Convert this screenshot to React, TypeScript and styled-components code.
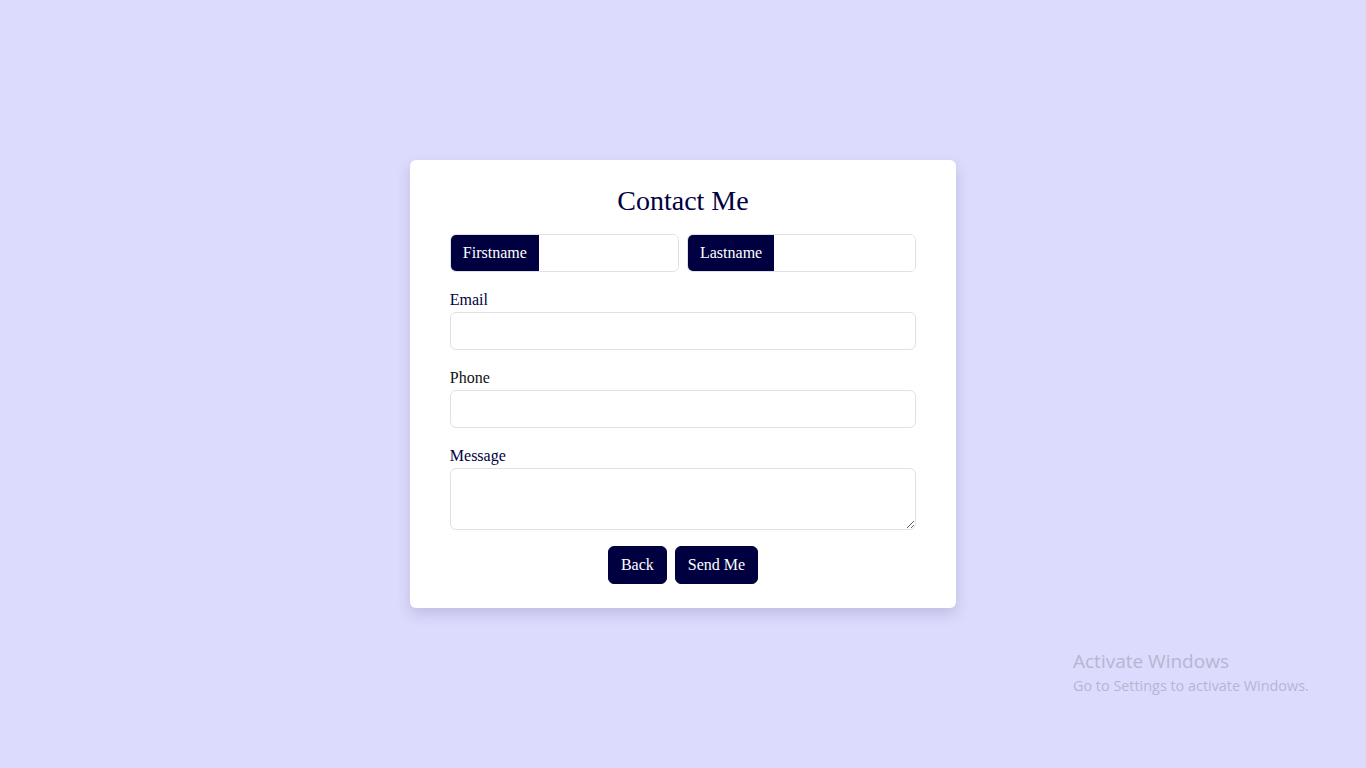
import styled, { createGlobalStyle } from "styled-components";

const NAVY = "#000040";

const GlobalStyle = createGlobalStyle`
  * {
    box-sizing: border-box;
  }
  html, body {
    margin: 0;
    padding: 0;
  }
  body {
    background: #dcdbfd;
    font-family: "Liberation Serif", "Times New Roman", serif;
    font-size: 16px;
    line-height: 1.5;
    color: #212529;
  }
`;

const Page = styled.main`
  position: relative;
  min-height: 100vh;
  display: flex;
  align-items: center;
  justify-content: center;
`;

const Card = styled.form`
  width: 40%;
  background: #fff;
  border-radius: 6px;
  padding: 25px 40px 24px;
  box-shadow: 0 6px 14px rgba(60, 60, 110, 0.18);
`;

const Title = styled.h2`
  margin: 0 0 16px;
  font-size: 28px;
  font-weight: 400;
  line-height: 1.15;
  text-align: center;
  color: ${NAVY};
`;

const NameRow = styled.div`
  display: grid;
  grid-template-columns: 1fr 1fr;
  gap: 8px;
  margin-bottom: 16px;
`;

const InputGroup = styled.div`
  display: flex;
  height: 38px;
  border: 1px solid #dee2e6;
  border-radius: 6px;
  overflow: hidden;
`;

const Addon = styled.label`
  display: flex;
  align-items: center;
  padding: 0 12px;
  background: ${NAVY};
  color: #fff;
  white-space: nowrap;
`;

const GroupInput = styled.input`
  flex: 1;
  min-width: 0;
  border: none;
  outline: none;
  padding: 0 12px;
  font: inherit;
`;

const Field = styled.div`
  margin-bottom: 16px;
`;

const Label = styled.label<{ $dark?: boolean }>`
  display: block;
  color: ${({ $dark }) => ($dark ? "#111" : NAVY)};
`;

const Input = styled.input`
  display: block;
  width: 100%;
  height: 38px;
  padding: 6px 12px;
  border: 1px solid #dee2e6;
  border-radius: 6px;
  font: inherit;
  outline: none;
`;

const TextArea = styled.textarea`
  display: block;
  width: 100%;
  height: 62px;
  padding: 6px 12px;
  border: 1px solid #dee2e6;
  border-radius: 6px;
  font: inherit;
  outline: none;
  resize: vertical;
`;

const Actions = styled.div`
  display: flex;
  justify-content: center;
  gap: 8px;
`;

const Button = styled.button`
  height: 38px;
  padding: 0 12px;
  background: ${NAVY};
  color: #fff;
  border: 1px solid ${NAVY};
  border-radius: 6px;
  font: inherit;
  cursor: pointer;
`;

const Watermark = styled.div`
  position: absolute;
  left: 1073px;
  top: 650px;
  font-family: "Open Sans", "Noto Sans", sans-serif;
  color: #b6b5d2;
  line-height: 1.2;
`;

const WatermarkTitle = styled.div`
  font-size: 19px;
`;

const WatermarkText = styled.div`
  font-size: 14.4px;
  margin-top: 4px;
`;

const App: React.FC = () => {
  return (
    <>
      <GlobalStyle />
      <Page>
        <Card onSubmit={(evt) => evt.preventDefault()}>
          <Title>Contact Me</Title>
          <NameRow>
            <InputGroup>
              <Addon htmlFor="firstname">Firstname</Addon>
              <GroupInput id="firstname" type="text" />
            </InputGroup>
            <InputGroup>
              <Addon htmlFor="lastname">Lastname</Addon>
              <GroupInput id="lastname" type="text" />
            </InputGroup>
          </NameRow>
          <Field>
            <Label htmlFor="email">Email</Label>
            <Input id="email" type="email" />
          </Field>
          <Field>
            <Label htmlFor="phone" $dark>
              Phone
            </Label>
            <Input id="phone" type="tel" />
          </Field>
          <Field>
            <Label htmlFor="message">Message</Label>
            <TextArea id="message" rows={2} />
          </Field>
          <Actions>
            <Button type="button">Back</Button>
            <Button type="submit">Send Me</Button>
          </Actions>
        </Card>
        <Watermark>
          <WatermarkTitle>Activate Windows</WatermarkTitle>
          <WatermarkText>Go to Settings to activate Windows.</WatermarkText>
        </Watermark>
      </Page>
    </>
  );
};

export default App;
